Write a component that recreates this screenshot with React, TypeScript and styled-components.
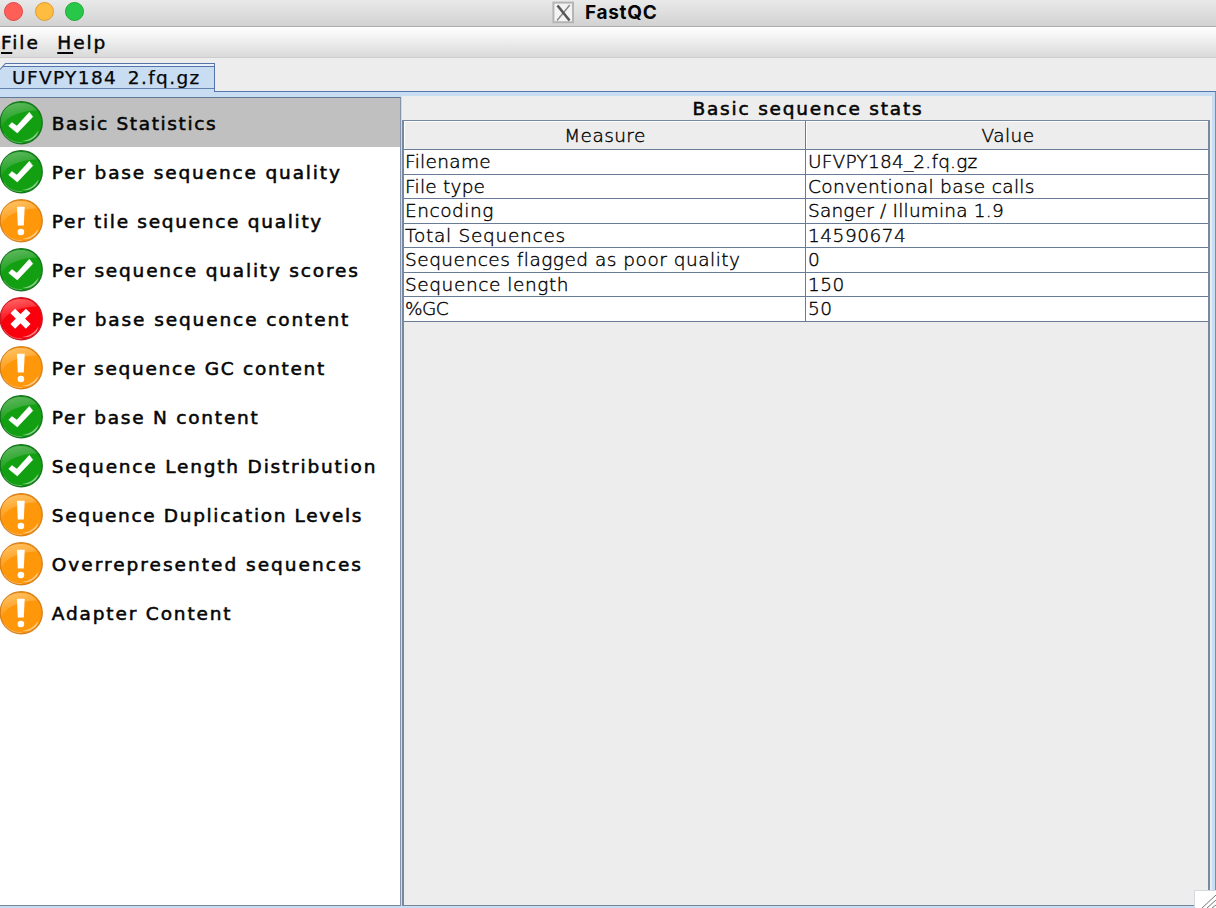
import React from "react";
import styled, { createGlobalStyle } from "styled-components";

const Global = createGlobalStyle`
  * { box-sizing: border-box; }
  body { margin: 0; overflow: hidden; background: #ededed; }
`;

const Window = styled.div`
  width: 1216px;
  height: 908px;
  display: flex;
  flex-direction: column;
  overflow: hidden;
  background: #ededed;
  color: #050505;
  font-family: "DejaVu Sans", sans-serif;
  position: relative;
`;

const TitleBar = styled.header`
  height: 27px;
  flex: none;
  display: grid;
  grid-template-columns: 552px auto 1fr;
  background: linear-gradient(#e9e9e9, #d2d2d2);
  border-bottom: 1px solid #adadad;
`;

const Lights = styled.div`
  display: flex;
  gap: 11.6px;
  padding: 1.5px 0 0 4px;
`;

const Light = styled.span<{ $fill: string; $edge: string }>`
  width: 19px;
  height: 19px;
  border-radius: 50%;
  background: ${(p) => p.$fill};
  border: 1px solid ${(p) => p.$edge};
`;

const Title = styled.h1`
  margin: 0;
  display: flex;
  align-items: flex-start;
  gap: 10px;
  font: 700 19px/25px Inter, sans-serif;
  letter-spacing: 0.7px;
`;

const MenuBar = styled.nav`
  height: 31px;
  flex: none;
  display: flex;
  gap: 17.5px;
  padding-left: 1px;
  background: linear-gradient(#ffffff, #dadada);
  border-bottom: 1px solid #cccccc;
`;

const MenuItem = styled.span`
  font: 400 18.5px/31px "DejaVu Sans", sans-serif;
  -webkit-text-stroke: 0.5px #050505;
  letter-spacing: 1.95px;
  u { text-underline-offset: 3px; text-decoration-thickness: 1.5px; }
`;

const TabStrip = styled.div`
  height: 34px;
  flex: none;
  display: flex;
  padding-top: 5px;
`;

const TabArea = styled.div`
  flex: none;
  width: 215px;
  height: 29px;
  position: relative;
  background: #c8dcf2;
  border-right: 1px solid #5574aa;
`;

const Tab = styled.div`
  height: 26px;
  border-top: 1px solid #5574aa;
  border-bottom: 1px solid #6382b0;
  background: linear-gradient(#e9f1fa 0 2px, #5574aa 2px 3px, #c8dcf2 3px);
  padding-left: 12px;
  overflow: hidden;
  white-space: nowrap;
  font: 400 18.5px/28px "DejaVu Sans", sans-serif;
  -webkit-text-stroke: 0.25px #050505;
  letter-spacing: 1.37px;
`;

const LowGlyph = styled.span`
  line-height: 0;
  vertical-align: -3px;
`;

const TabCorner = styled.svg`
  position: absolute;
  left: 0;
  top: 0;
`;

const StripRule = styled.div`
  flex: 1;
  height: 29px;
  border-bottom: 1px solid #5478ac;
`;

const Content = styled.main`
  flex: 1;
  min-height: 0;
  display: flex;
  background: #c8dcf2;
  border-right: 1px solid #6d8fc0;
`;

const ModuleList = styled.ul`
  margin: 5px 1px 2px 0;
  padding: 0;
  width: 401px;
  flex: none;
  list-style: none;
  background: #fff;
  border-top: 1px solid #62799a;
  border-right: 1px solid #8493aa;
  border-bottom: 1px solid #788798;
`;

const Module = styled.li<{ $selected?: boolean }>`
  height: 49px;
  display: flex;
  align-items: center;
  background: ${(p) => (p.$selected ? "#c0c0c0" : "transparent")};
  svg { flex: none; margin-right: 8.8px; }
`;

const Label = styled.span<{ $adjust: number }>`
  padding-top: 2px;
  font: 400 18.5px/26px "DejaVu Sans", sans-serif;
  -webkit-text-stroke: 0.55px #050505;
  letter-spacing: ${(p) => 1.75 + p.$adjust}px;
  white-space: nowrap;
`;

const Report = styled.section`
  width: 810px;
  margin: 4px 0 2px;
  padding-right: 2px;
  background: #ededed;
  border-bottom: 1px solid #788798;
`;

const Heading = styled.h2`
  margin: 0;
  height: 24px;
  padding-left: 4px;
  text-align: center;
  font: 400 18.5px/25px "DejaVu Sans", sans-serif;
  -webkit-text-stroke: 0.55px #050505;
  letter-spacing: 1.8px;
`;

const TableFrame = styled.div`
  height: 785px;
  border: 2px solid #7688a2;
  border-width: 1px 2px 0 2px;
`;

const Table = styled.div`
  display: grid;
  grid-template-columns: 402px 1fr;
  grid-template-rows: 29px repeat(7, 24.5px);
`;

const Cell = styled.div<{ $head?: boolean; $adjust?: number }>`
  border-right: 1px solid #687c98;
  border-bottom: 1px solid #687c98;
  background: ${(p) => (p.$head ? "#ededed" : "#fff")};
  box-shadow: ${(p) => (p.$head ? "inset 1px 1px #fff" : "none")};
  text-align: ${(p) => (p.$head ? "center" : "left")};
  padding-left: 1px;
  font: 200 18.5px/${(p) => (p.$head ? 29 : 23)}px "DejaVu Sans", "DejaVu Sans Light", sans-serif;
  -webkit-text-stroke: 0.4px #000;
  letter-spacing: ${(p) => 0.43 + (p.$adjust ?? 0)}px;
  white-space: nowrap;
  &:nth-child(even) { border-right: 0; padding-left: 2px; }
`;

const Grip = styled.div`
  position: absolute;
  right: 0;
  bottom: 0;
  width: 22px;
  height: 18px;
  background: #fff;
  border: 1px solid #d5d8dc;
  border-width: 1px 0 0 1px;
  svg { display: block; }
`;

type Status = "pass" | "warn" | "fail";

const palette: Record<Status, [string, string, string]> = {
  pass: ["#68b968", "#12a012", "#16761d"],
  warn: ["#ffc66d", "#ff970b", "#d8821c"],
  fail: ["#ff7070", "#fa000c", "#c91822"],
};

function StatusIcon({ status }: { status: Status }) {
  const [light, base, edge] = palette[status];
  const id = `shine-${status}`;
  return (
    <svg width="43" height="45" viewBox="0 0 43 45">
      <defs>
        <linearGradient id={id} x1="0" y1="0" x2="0.35" y2="1">
          <stop offset="0" stopColor={light} />
          <stop offset="1" stopColor={base} />
        </linearGradient>
      </defs>
      <circle cx="21.2" cy="22.7" r="21" fill={base} stroke={edge} strokeWidth="1.4" />
      <path d="M1.5 26.5C-1 10 9 3 21 3c8 0 13 3 16 7.5C22 10.5 7 15.5 1.5 26.5Z" fill={`url(#${id})`} />
      <path d="M22 41c8-1 13-5 16.5-10.5C38 37 30 42.5 22 41Z" fill="#fff" opacity=".5" />
      <path d="M4 33.5c4 7 11 9.5 18 9" fill="none" stroke="#fff" strokeWidth="1" opacity=".3" />
      {status === "pass" && (
        <path d="M8.7 26l3.2-3.5 5 3.6L29.3 12.3l3.5 4.4L17.3 33Z" fill="#fff" stroke="#fff" strokeWidth=".5" />
      )}
      {status === "warn" && (
        <g fill="#fff">
          <path d="M17 8.7h7.7L23.8 27.6h-6Z" />
          <circle cx="20.9" cy="34" r="3.3" />
        </g>
      )}
      {status === "fail" && <path d="M12.8 15l15.4 15.4M28.2 15L12.8 30.4" stroke="#fff" strokeWidth="6.6" />}
    </svg>
  );
}

const modules: { name: string; status: Status; adjust: number }[] = [
  { name: "Basic Statistics", status: "pass", adjust: -0.12 },
  { name: "Per base sequence quality", status: "pass", adjust: 0.1 },
  { name: "Per tile sequence quality", status: "warn", adjust: -0.04 },
  { name: "Per sequence quality scores", status: "pass", adjust: 0.06 },
  { name: "Per base sequence content", status: "fail", adjust: 0.14 },
  { name: "Per sequence GC content", status: "warn", adjust: -0.02 },
  { name: "Per base N content", status: "pass", adjust: 0.02 },
  { name: "Sequence Length Distribution", status: "pass", adjust: 0.06 },
  { name: "Sequence Duplication Levels", status: "warn", adjust: -0.09 },
  { name: "Overrepresented sequences", status: "warn", adjust: 0.26 },
  { name: "Adapter Content", status: "warn", adjust: 0.1 },
];

const stats: { measure: string; value: string; adjust: [number, number] }[] = [
  { measure: "Filename", value: "UFVPY184_2.fq.gz", adjust: [-0.1, -0.22] },
  { measure: "File type", value: "Conventional base calls", adjust: [-0.2, -0.1] },
  { measure: "Encoding", value: "Sanger / Illumina 1.9", adjust: [0.1, -0.24] },
  { measure: "Total Sequences", value: "14590674", adjust: [0.3, 0.1] },
  { measure: "Sequences flagged as poor quality", value: "0", adjust: [0.07, 0] },
  { measure: "Sequence length", value: "150", adjust: [0.15, 0] },
  { measure: "%GC", value: "50", adjust: [-1, 0] },
];

export default function App() {
  return (
    <Window>
      <Global />
      <TitleBar>
        <Lights>
          <Light $fill="#ff5f57" $edge="#df4744" />
          <Light $fill="#febc40" $edge="#dc9c30" />
          <Light $fill="#27c84a" $edge="#1aa934" />
        </Lights>
        <Title>
          <svg width="23" height="24" viewBox="0 0 23 24">
            <rect x="1.4" y="2.6" width="19.6" height="19.6" fill="#f3f3f3" stroke="#b5b5b5" strokeWidth="2" />
            <path d="M17.8 5L5 20.5" stroke="#8a8a8a" strokeWidth="1.5" />
            <path d="M5.5 5.5L17.5 20.5" stroke="#555" strokeWidth="2.6" />
          </svg>
          FastQC
        </Title>
      </TitleBar>
      <MenuBar>
        <MenuItem><u>F</u>ile</MenuItem>
        <MenuItem><u>H</u>elp</MenuItem>
      </MenuBar>
      <TabStrip>
        <TabArea>
          <Tab>UFVPY184<LowGlyph>_</LowGlyph>2.fq.gz</Tab>
          <TabCorner width="7" height="8" viewBox="0 0 7 8">
            <path d="M0 0H5.5L0 6.5Z" fill="#ededed" />
            <path d="M0 6.5L5.5 .5" stroke="#5574aa" strokeWidth="1.1" />
          </TabCorner>
        </TabArea>
        <StripRule />
      </TabStrip>
      <Content>
        <ModuleList>
          {modules.map((m, i) => (
            <Module key={m.name} $selected={i === 0}>
              <StatusIcon status={m.status} />
              <Label $adjust={m.adjust}>{m.name}</Label>
            </Module>
          ))}
        </ModuleList>
        <Report>
          <Heading>Basic sequence stats</Heading>
          <TableFrame>
            <Table>
              <Cell $head>Measure</Cell>
              <Cell $head>Value</Cell>
              {stats.map((s) => (
                <React.Fragment key={s.measure}>
                  <Cell $adjust={s.adjust[0]}>{s.measure}</Cell>
                  <Cell $adjust={s.adjust[1]}>{s.value}</Cell>
                </React.Fragment>
              ))}
            </Table>
          </TableFrame>
        </Report>
      </Content>
      <Grip>
        <svg width="21" height="17" viewBox="0 0 21 17" stroke="#777" fill="none">
          <path d="M7 17L21 4M12 17L21 9M17 17L21 14" />
        </svg>
      </Grip>
    </Window>
  );
}
